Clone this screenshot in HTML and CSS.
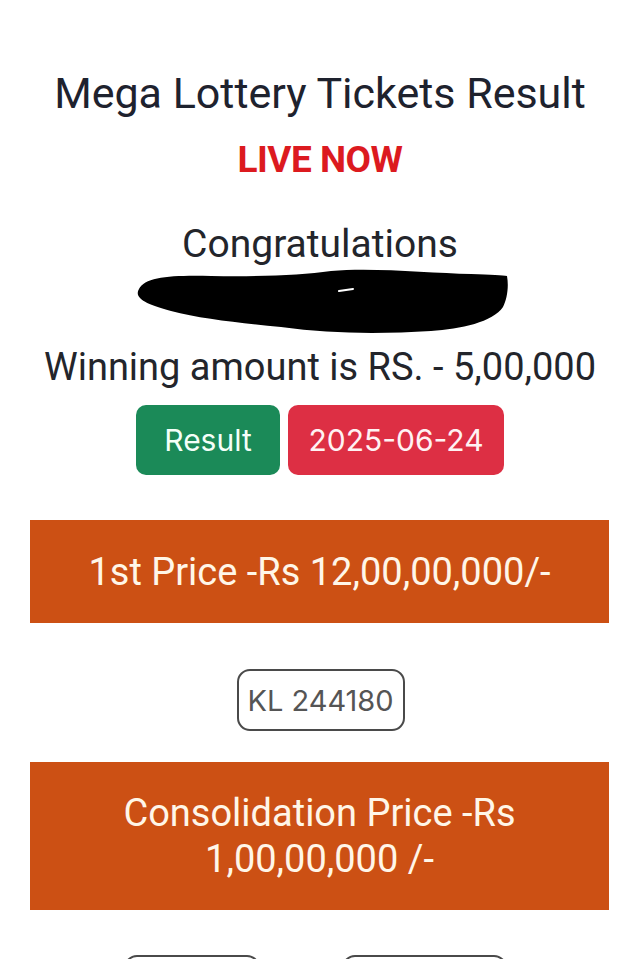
FILE: index.html
```html
<!DOCTYPE html>
<html>
<head>
<meta charset="utf-8">
<link rel="stylesheet" href="styles.css">
</head>
<body>
<main class="page">
  <h1 class="title">Mega Lottery Tickets Result</h1>
  <div class="live">LIVE NOW</div>
  <div class="congrats">Congratulations</div>
  <div class="redact">
    <svg width="380" height="70" viewBox="0 0 380 70">
      <path d="M8 22 C 14 10, 40 8, 80 9 C 130 10, 170 8, 200 4 C 240 0, 300 6, 340 7 C 360 8, 372 8, 376 9 C 378 20, 376 32, 372 40 C 362 55, 330 62, 300 64 C 250 67, 200 67, 150 60 C 110 56, 70 52, 40 44 C 18 38, 2 32, 8 22 Z" fill="#000"/>
      <path d="M208 24 L 222 22" stroke="#fff" stroke-width="2" stroke-linecap="round"/>
    </svg>
  </div>
  <div class="amount">Winning amount is RS. - 5,00,000</div>
  <div class="btns">
    <span class="btn btn-green">Result</span>
    <span class="btn btn-red">2025-06-24</span>
  </div>
  <div class="banner banner-one">1st Price -Rs 12,00,00,000/-</div>
  <div class="ticket-row"><span class="ticket tk-main">KL 244180</span></div>
  <div class="banner banner-two">Consolidation Price -Rs<br>1,00,00,000 /-</div>
  <div class="ticket-row bottom">
    <span class="ticket tk-a">&nbsp;</span>
    <span class="ticket tk-b">&nbsp;</span>
  </div>
</main>
</body>
</html>
```

FILE: styles.css
```css
html, body {
  margin: 0;
  padding: 0;
  background: #ffffff;
}
.page {
  display: flex;
  flex-direction: column;
  align-items: center;
  font-family: Roboto, "Liberation Sans", sans-serif;
  padding-top: 67px;
  height: 959px;
  box-sizing: border-box;
  overflow: hidden;
}
.page > * { flex-shrink: 0; }
.title {
  margin: 0;
  font-size: 43px;
  line-height: 52px;
  font-weight: 400;
  color: #1e222e;
}
.live {
  margin-top: 19px;
  font-size: 37px;
  line-height: 44px;
  font-weight: 700;
  color: #dc1a1f;
  letter-spacing: -0.5px;
}
.congrats {
  margin-top: 39px;
  font-size: 39px;
  line-height: 46px;
  color: #23252b;
}
.redact {
  margin-top: 0;
  height: 70px;
  width: 380px;
  margin-left: 2px;
}
.redact svg { display: block; }
.amount {
  margin-top: 8px;
  font-size: 38px;
  line-height: 44px;
  color: #23252b;
}
.btns {
  margin-top: 16px;
  display: flex;
  gap: 8px;
}
.btn {
  display: flex;
  align-items: center;
  justify-content: center;
  height: 70px;
  border-radius: 10px;
  font-family: Inter, "DejaVu Sans", sans-serif;
  font-size: 30px;
  color: #f4fff8;
}
.btn-green {
  width: 144px;
  background: #1b8a58;
}
.btn-red {
  width: 216px;
  background: #dd2f44;
  color: #fff2f3;
}
.banner {
  align-self: stretch;
  margin: 0 31px 0 30px;
  background: #cc5014;
  color: #fff6e8;
  font-size: 38px;
  text-align: center;
  display: flex;
  align-items: center;
  justify-content: center;
}
.banner-one {
  margin-top: 45px;
  height: 103px;
}
.banner-two {
  margin-top: 31px;
  height: 148px;
  line-height: 46px;
}
.ticket-row {
  margin-top: 46px;
  display: flex;
  justify-content: center;
}
.ticket {
  display: inline-flex;
  align-items: center;
  justify-content: center;
  height: 62px;
  box-sizing: border-box;
  border: 2px solid #4a4a4a;
  border-radius: 13px;
  font-family: Inter, "DejaVu Sans", sans-serif;
  font-size: 29px;
  color: #555555;
}
.tk-main { width: 168px; margin-left: 1px; }
.ticket-row.bottom {
  margin-top: 45px;
  margin-left: -10px;
  gap: 82px;
}
.tk-a { width: 136px; }
.tk-b { width: 165px; }
```
